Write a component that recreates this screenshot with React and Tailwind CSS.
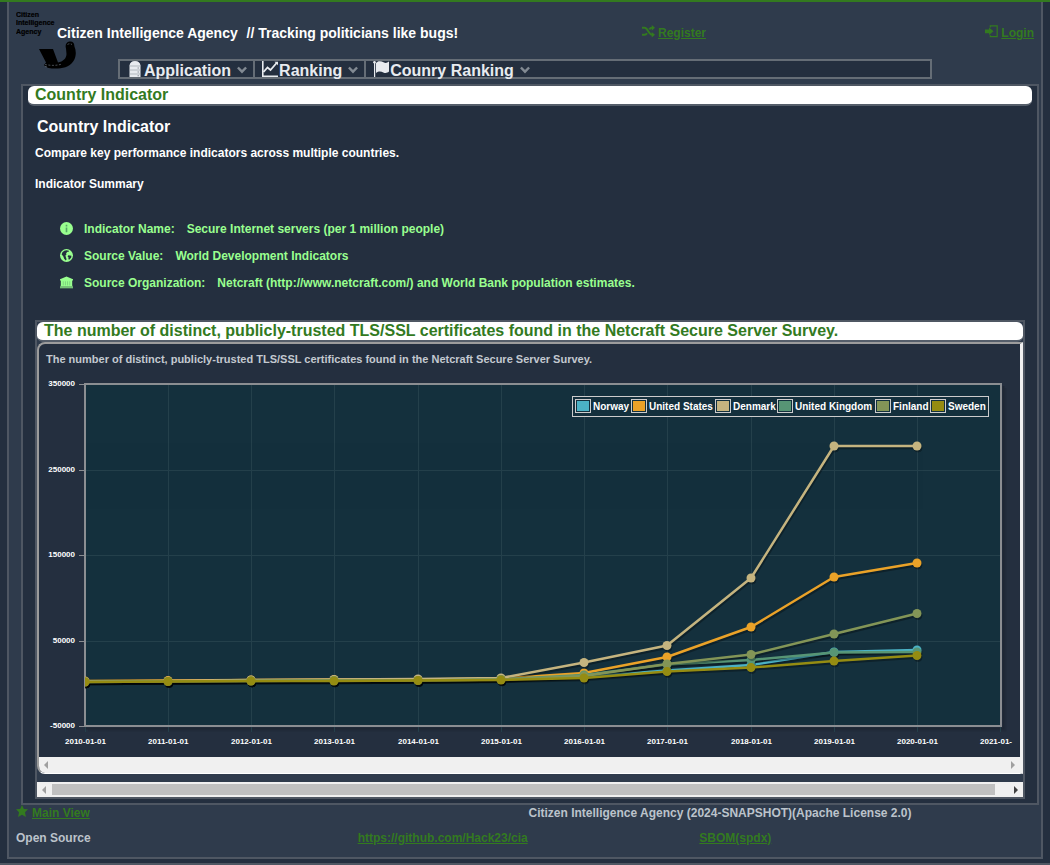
import React from "react";

const YEARS = ["2010-01-01", "2011-01-01", "2012-01-01", "2013-01-01", "2014-01-01", "2015-01-01", "2016-01-01", "2017-01-01", "2018-01-01", "2019-01-01", "2020-01-01", "2021-01-"];

const SERIES = [
  { name: "Norway", color: "#4bb2c5", legendX: 575, points: [682, 681.5, 681, 681, 680.5, 679.5, 677, 670.5, 665, 652, 650] },
  { name: "United States", color: "#eaa228", legendX: 631, points: [681, 680.5, 680, 679.5, 679.5, 678.5, 673, 657, 627, 577, 563] },
  { name: "Denmark", color: "#c5b47f", legendX: 715, points: [681.5, 681, 680, 679.5, 679, 678, 662.5, 645.5, 578, 446, 446] },
  { name: "United Kingdom", color: "#579575", legendX: 777, points: [682, 681.5, 681, 680.5, 680.5, 679.5, 675, 664.5, 660, 652.5, 652] },
  { name: "Finland", color: "#839557", legendX: 875, points: [682, 681.5, 681, 680.5, 680.5, 679.5, 676, 664, 654.5, 634, 613.5] },
  { name: "Sweden", color: "#958c12", legendX: 930, points: [682, 681.5, 681, 681, 680.5, 680, 678, 671.5, 667.5, 661, 655.5] },
];

const Y_TICKS = [
  ["350000", 384],
  ["250000", 470],
  ["150000", 555],
  ["50000", 641],
  ["-50000", 726],
];

const xAt = (i) => Math.floor(85 + i * 83.25);

function Svg({ children, className }) {
  return (
    <svg viewBox="0 0 16 16" className={className} fill="currentColor" aria-hidden="true">
      {children}
    </svg>
  );
}

const RandomIcon = () => (
  <Svg className="mt-px size-[13px] shrink-0">
    <path d="M0 3.500h3.300c4 0 4.500 8.500 9.200 8.500M0 12h3.300c1.300 0 2.200-.8 2.900-1.900M9 5.300c.8-1.100 1.800-1.800 3.500-1.800" fill="none" stroke="currentColor" strokeWidth="2.400" />
    <path d="M12 0l4 3.500L12 7zM12 8.500l4 3.500-4 3.500z" />
  </Svg>
);

const SignInIcon = () => (
  <Svg className="mt-px size-[13px] shrink-0">
    <path d="M0 5.500h5V3l5.500 4.700L5 12.400V10H0z" />
    <path d="M6.500 14.200h8.500V1.200H6.500v2M6.500 15v-2.500" fill="none" stroke="currentColor" strokeWidth="1.500" />
  </Svg>
);

const StarIcon = () => (
  <Svg className="size-3 shrink-0">
    <path d="M8 0l2.500 5.200 5.500.6-4 4L13.200 16 8 13l-5.200 3L4 9.800l-4-4 5.500-.6z" />
  </Svg>
);

const InfoIcon = () => (
  <Svg className="size-[13px] shrink-0">
    <circle cx="8" cy="8" r="8" />
    <path d="M7 3.500h2v2H7zM7 6.700h2v5.800H7z" fill="#57a566" />
  </Svg>
);

const GlobeIcon = () => (
  <Svg className="size-[13px] shrink-0">
    <circle cx="8" cy="8" r="8" />
    <path d="M8 1.400l3 .8-.6 1.500-1.400-.2-1.600 2 .7 1-1.400 1.500.6 2.500.8 2-1 1.500-2-2L4 8.800 2 6.800l1-2.900 2.300-1.800zM10.200 7.800l3.900.4-.4 2.500-2.500 2.500-1-1 .5-1.500-1.300-1.600z" fill="#242f3f" />
  </Svg>
);

const InstitutionIcon = () => (
  <Svg className="size-[13px] shrink-0">
    <path d="M8 .5L16 4v1.500h-1V12h.5v1H.5v-1H1V5.500H0V4z" />
    <path d="M4 6.500v5M6.700 6.500v5M9.300 6.500v5M12 6.500v5" stroke="#6fbf74" strokeWidth=".8" />
    <path d="M0 12.800h16v2.400H0z" opacity=".7" />
  </Svg>
);

const ServerIcon = () => (
  <Svg className="size-4 shrink-0">
    <path d="M2.500 4.500C3 1.500 4.500 0 8 0s5 1.500 5.500 4.500V16h-11z" />
    <path d="M2.500 5h11M2.500 9h11M2.500 13h11" stroke="#9aa1aa" strokeWidth=".7" />
    <path d="M10.500 6.500h1.500v1h-1.500zM10.500 10.500h1.500v1h-1.500zM10.500 14.300h1.500v1h-1.500z" fill="#8d949d" />
  </Svg>
);

const ChartIcon = () => (
  <Svg className="size-4 shrink-0">
    <path d="M.8 0v15.200H16" fill="none" stroke="currentColor" strokeWidth="1.600" />
    <path d="M1.500 11L5.500 6.500l3 2.500 6.500-7.500" fill="none" stroke="currentColor" strokeWidth="1.800" />
    <path d="M12.500.8H16v3.500z" />
  </Svg>
);

const FlagIcon = () => (
  <Svg className="size-4 shrink-0">
    <circle cx="1.500" cy="1.300" r="1.300" />
    <path d="M1 2h1.200v14H1z" />
    <path d="M3 2C5.500-.5 8.500.3 10.500 1.300s3.500.8 5.500-.8v10c-2 1.700-3.700 1.700-5.700.9S6 9.600 3 12z" />
  </Svg>
);

const Chevron = () => (
  <svg viewBox="0 0 10 8" className="mt-0.5 h-2 w-2.5 shrink-0 text-[#828a93]" fill="none" stroke="currentColor" strokeWidth="2.400" aria-hidden="true">
    <path d="M.9 1.500L5 5.700l4.100-4.200" />
  </svg>
);

function Logo() {
  return (
    <svg viewBox="0 0 60 60" className="absolute left-[7px] top-2 size-[60px]" role="img" aria-label="Citizen Intelligence Agency">
      <g fontSize="7" fontWeight="700" fill="#000" stroke="#000" strokeWidth=".2">
        <text x="0" y="7">Citizen</text>
        <text x="0" y="15">Intelligence</text>
        <text x="0" y="24">Agency</text>
      </g>
      <path d="M23 39h14l5 13.500c5-1 8.500-4 8.500-8.500l-.5-5.500c-1-3 0-6.500 3.500-7s5 2 4.800 4.500c2.200 5 2 10.500-.8 15-4.500 6.500-11 7.500-18 7.500-5 0-9.500-.5-11.500-3.500l2-2.500z" fill="#000" />
      <path d="M29 54.500c5 1 11 1.500 17-.5M51.500 34.500c1.500-1 3-1 4.500 0M29 56.500l3 .5" fill="none" stroke="#77808c" strokeWidth=".6" strokeDasharray="2 1.500" />
    </svg>
  );
}

function MenuItem({ icon, label, divider }) {
  return (
    <button type="button" className={"flex items-center pr-1.5 pl-[7px] text-base leading-4 font-bold text-[#e8ebef] " + (divider ? "border-r-2 border-[#656d76]" : "")}>
      {icon}
      <span className="mt-1 mr-1.5 ml-px">{label}</span>
      <Chevron />
    </button>
  );
}

function Fact({ icon, label, value }) {
  return (
    <li className="flex h-[27px] items-center text-[#99ff8f]">
      {icon}
      <span className="ml-[11px]">{label}</span>
      <span className="ml-3">{value}</span>
    </li>
  );
}

function PanelTitle({ children, className }) {
  return (
    <h2 className={"h-5 rounded-md border-b-2 border-[#555e6a] bg-white px-[7px] text-base leading-[18px] font-bold text-[#337a1f] " + className}>
      {children}
    </h2>
  );
}

function Chart() {
  return (
    <svg viewBox="39 375 981 382" className="block h-auto w-full" role="img" aria-label="Secure Internet servers per country">
      <defs>
        <clipPath id="plot"><rect x="85" y="384" width="917" height="343" /></clipPath>
      </defs>
      <g fill="none" stroke="#000">
        <path d="M1003.500 386v342.500H86" strokeWidth="2" opacity=".16" />
        <path d="M1005.500 388v342.500H88" strokeWidth="2" opacity=".08" />
      </g>
      <rect x="85" y="384" width="916" height="342" fill="#14303d" />
      <g stroke="#24404b" strokeWidth="1">
        {YEARS.map((y, i) => (
          <path key={y} d={`M${xAt(i) + 0.5} 384V732`} />
        ))}
        {Y_TICKS.map(([t, y]) => (
          <path key={t} d={`M85 ${y + 0.5}H1001`} />
        ))}
      </g>
      <g stroke="#8a8d91" strokeWidth="1">
        {Y_TICKS.map(([t, y]) => (
          <path key={t} d={`M79 ${y + 0.5}H85`} />
        ))}
      </g>
      <rect x="85" y="384" width="916" height="342" fill="none" stroke="#8b8e92" strokeWidth="2" />
      <g clipPath="url(#plot)">
        {SERIES.map((s) => {
          const line = s.points.map((y, i) => `${xAt(i)},${y}`).join(" ");
          return (
            <g key={s.name}>
              <g opacity=".3" fill="#000" stroke="#000">
                <polyline points={line} transform="translate(1 2)" fill="none" strokeWidth="2.500" />
                {s.points.map((y, i) => (
                  <circle key={i} cx={xAt(i) + 1} cy={y + 2} r="4" />
                ))}
              </g>
              <polyline points={line} fill="none" stroke={s.color} strokeWidth="2.500" strokeLinejoin="round" />
              {s.points.map((y, i) => (
                <circle key={i} cx={xAt(i)} cy={y} r="4.500" fill={s.color} />
              ))}
            </g>
          );
        })}
      </g>
      <g fontWeight="700" fontSize="8" fill="#fff">
        {Y_TICKS.map(([t, y]) => (
          <text key={t} x="75" y={y + 2} textAnchor="end">{t}</text>
        ))}
        {YEARS.map((t, i) => (
          <text key={t} x={xAt(i) - 20} y="744">{t}</text>
        ))}
      </g>
      <rect x="572.500" y="396.500" width="416" height="20" fill="#14303d" stroke="#ccc" />
      <g fontWeight="700" fontSize="10" fill="#fff">
        {SERIES.map((s) => (
          <g key={s.name}>
            <rect x={s.legendX + 0.5} y="399.500" width="15" height="13" fill="#14303d" stroke="#ccc" />
            <rect x={s.legendX + 2} y="401" width="12" height="10" fill={s.color} />
            <text x={s.legendX + 18} y="410">{s.name}</text>
          </g>
        ))}
      </g>
    </svg>
  );
}

const ArrowLeft = ({ className }) => (
  <svg viewBox="0 0 4 8" className={"h-2 w-1 " + className} fill="currentColor" aria-hidden="true"><path d="M4 0v8L0 4z" /></svg>
);
const ArrowRight = ({ className }) => (
  <svg viewBox="0 0 4 8" className={"h-2 w-1 " + className} fill="currentColor" aria-hidden="true"><path d="M0 0v8l4-4z" /></svg>
);

export default function App() {
  const link = "text-[#337a1f] underline";
  return (
    <div className="min-h-screen border-t-2 border-b-2 border-t-[#337a1f] border-b-[#4f5763] bg-[#242f3f] px-[7px] pb-1 font-['Liberation_Sans',Arial,sans-serif] text-xs leading-4 font-bold text-white">
      <div className="border-x-2 border-b-2 border-[#4f5763] bg-[#2f3b4c]">
        <header className="relative pb-[5px]">
          <Logo />
          <div className="relative grid h-[57px] grid-cols-[585fr_392fr] items-center pt-2 pr-[7px] pb-1 pl-12">
            <h1 className="text-sm whitespace-pre">Citizen Intelligence Agency  <span className="ml-px">// Tracking politicians like bugs!</span></h1>
            <div className="flex justify-between">
              <a href="#register" className="flex gap-[3px] text-[#337a1f]"><RandomIcon /><span className="mt-px underline">Register</span></a>
              <a href="#login" className="flex gap-[3px] text-[#337a1f]"><SignInIcon /><span className="mt-px underline">Login</span></a>
            </div>
          </div>
          <nav className="mx-[109px] flex h-5 border-2 border-[#656d76] bg-[#242f3f]">
            <MenuItem icon={<ServerIcon />} label="Application" divider />
            <MenuItem icon={<ChartIcon />} label="Ranking" divider />
            <MenuItem icon={<FlagIcon />} label="Counry Ranking" />
          </nav>
        </header>

        <main className="mr-0.5 ml-3 border-2 border-[#4f5763] bg-[#242f3f] pb-1">
          <PanelTitle className="mx-[5px]">Country Indicator</PanelTitle>
          <div className="px-3 pt-[11px]">
            <h3 className="pl-0.5 text-base leading-5">Country Indicator</h3>
            <p className="mt-2">Compare key performance indicators across multiple countries.</p>
            <p className="mt-[15px]">Indicator Summary</p>
            <ul className="mt-[23px] mb-6 pl-[25px]">
              <Fact icon={<InfoIcon />} label="Indicator Name:" value="Secure Internet servers (per 1 million people)" />
              <Fact icon={<GlobeIcon />} label="Source Value:" value="World Development Indicators" />
              <Fact icon={<InstitutionIcon />} label="Source Organization:" value="Netcraft (http://www.netcraft.com/) and World Bank population estimates." />
            </ul>

            <section className="border-2 border-[#4f5763] bg-[#2f3b4c]">
              <PanelTitle className="">The number of distinct, publicly-trusted TLS/SSL certificates found in the Netcraft Secure Server Survey.</PanelTitle>
              <div className="overflow-hidden rounded-l-lg border-t-2 border-r-[3px] border-b border-l-2 border-t-[#9c9c9c] border-r-[#f0f0f0] border-b-white border-l-[#9c9c9c] bg-[#242f3f]">
                <h4 className="h-[31px] px-[7px] pt-[7px] text-[11px] text-[#c3c9d0]">The number of distinct, publicly-trusted TLS/SSL certificates found in the Netcraft Secure Server Survey.</h4>
                <Chart />
                <div className="flex h-4 items-center justify-between bg-[#f0f0f0] px-[5px] text-[#a0a0a0]">
                  <ArrowLeft className="" />
                  <ArrowRight className="" />
                </div>
              </div>
              <div className="mt-2 flex h-[15px] items-center bg-[#f0f0f0] px-[5px]">
                <ArrowLeft className="text-[#a0a0a0]" />
                <div className="mr-[19px] ml-1.5 h-[11px] flex-1 bg-[#c0c0c0]" />
                <ArrowRight className="text-[#404040]" />
              </div>
            </section>
          </div>
        </main>

        <footer className="pb-[11px] pl-[7px] text-[#bcc3cb]">
          <div className="grid grid-cols-2">
            <a href="#main" className="flex gap-1 text-[#337a1f]"><StarIcon /><span className="underline">Main View</span></a>
            <span>Citizen Intelligence Agency (2024-SNAPSHOT)(Apache License 2.0)</span>
          </div>
          <div className="mt-[9px] grid grid-cols-3">
            <span>Open Source</span>
            <span><a href="https://github.com/Hack23/cia" className={link}>https://github.com/Hack23/cia</a></span>
            <span><a href="#sbom" className={link}>SBOM(spdx)</a></span>
          </div>
        </footer>
      </div>
    </div>
  );
}
